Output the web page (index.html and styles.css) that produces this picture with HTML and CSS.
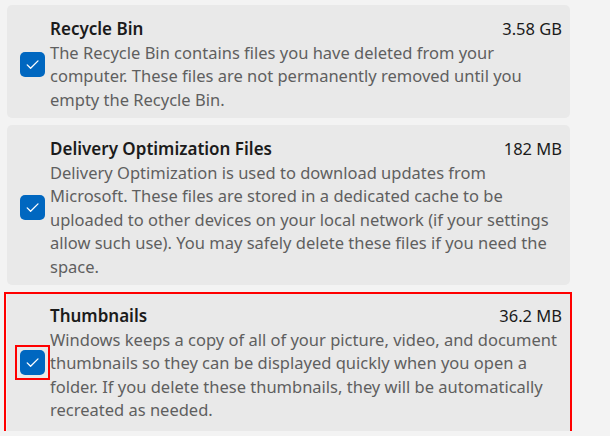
FILE: index.html
```html
<!DOCTYPE html>
<html lang="en">
  <head>
    <meta charset="utf-8">
    <meta name="viewport" content="width=device-width">
    <link rel="stylesheet" href="styles.css">
  </head>
  <body>
    <div class="list">
      <div class="card">
        <span class="check"><svg viewBox="0 0 25 25"><path d="M7.2 12.9 L10.6 16.3 L18 8.9"/></svg></span>
        <div class="info">
          <div class="head"><span class="title">Recycle Bin</span><span class="size">3.58 GB</span></div>
          <p class="desc">The Recycle Bin contains files you have deleted from your<br>
            computer. These files are not permanently removed until you<br>
            empty the Recycle Bin.</p>
        </div>
      </div>
      <div class="card">
        <span class="check"><svg viewBox="0 0 25 25"><path d="M7.2 12.9 L10.6 16.3 L18 8.9"/></svg></span>
        <div class="info">
          <div class="head"><span class="title">Delivery Optimization Files</span><span class="size">182 MB</span></div>
          <p class="desc">Delivery Optimization is used to download updates from<br>
            Microsoft. These files are stored in a dedicated cache to be<br>
            uploaded to other devices on your local network (if your settings<br>
            allow such use). You may safely delete these files if you need the<br>
            space.</p>
        </div>
      </div>
      <div class="card marked">
        <span class="check marked"><svg viewBox="0 0 25 25"><path d="M7.2 12.9 L10.6 16.3 L18 8.9"/></svg></span>
        <div class="info">
          <div class="head"><span class="title">Thumbnails</span><span class="size">36.2 MB</span></div>
          <p class="desc">Windows keeps a copy of all of your picture, video, and document<br>
            thumbnails so they can be displayed quickly when you open a<br>
            folder. If you delete these thumbnails, they will be automatically<br>
            recreated as needed.</p>
        </div>
      </div>
    </div>
  </body>
</html>
```

FILE: styles.css
```css
* {margin: 0; padding: 0;}

body {
	background: #f3f3f3;
	font-family: "Noto Sans", "Open Sans", sans-serif;
	font-size: 16.5px;
	line-height: 23.5px;
	color: #1b1b1b;
}

.list {
	display: flex;
	flex-direction: column;
	gap: 7px;
	width: 563px;
	padding: 5px 0 0 7px;
}

.card {
	display: grid;
	grid-template-columns: 25px 1fr;
	column-gap: 5px;
	align-items: center;
	background: #e9e9e9;
	border-radius: 5px;
	padding: 12px 8px 7px 13px;
}

/* red marking round the last row */
.card.marked {position: relative; border-radius: 0; padding-bottom: 9px;}
.card.marked::after {
	content: "";
	position: absolute;
	top: 0; left: -3px; right: -2px; bottom: -2px;
	border: 2px solid #ff0000;
	pointer-events: none;
}

.check {
	display: block;
	width: 25px;
	height: 25px;
	border-radius: 5px;
	background: #0067c0;
}
.check svg {display: block; width: 25px; height: 25px;}
.check path {fill: none; stroke: #fff; stroke-width: 1.3; stroke-linecap: round; stroke-linejoin: round;}
.check.marked {position: relative;}
.check.marked::after {
	content: "";
	position: absolute;
	top: -5px; left: -5px; right: -5px; bottom: -5px;
	border: 2px solid #ff0000;
}

.head {
	display: flex;
	justify-content: space-between;
}
.title {font-weight: 600; font-size: 17px;}
.size {color: #1b1b1b;}

.desc {color: #5f5f5f; white-space: nowrap;}
```
